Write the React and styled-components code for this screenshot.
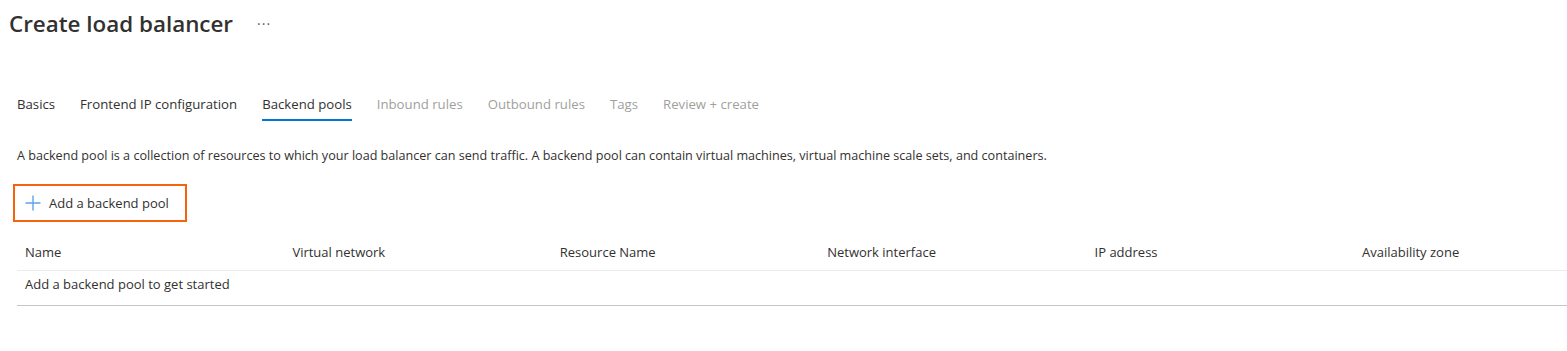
import React from 'react';
import styled, { createGlobalStyle } from 'styled-components';

const Global = createGlobalStyle`
  body {
    margin: 0;
    background: #fff;
    font-family: "Open Sans", "Noto Sans", sans-serif;
    color: #323130;
    overflow: hidden;
  }
`;

const Page = styled.div`
  padding-left: 17px;
  width: 1550px;
`;

const TitleRow = styled.div`
  display: flex;
  align-items: center;
  gap: 24px;
  margin: 8px 0 0 -8px;
  height: 32px;
`;

const Title = styled.h1`
  margin: 0;
  font-size: 22.4px;
  font-weight: 600;
  line-height: 32px;
  color: #323130;
`;

const More = styled.span`
  font-size: 14px;
  color: #605e5c;
  letter-spacing: 1px;
  line-height: 32px;
`;

const Tabs = styled.div`
  display: flex;
  gap: 25px;
  margin-top: 48px;
`;

const Tab = styled.div`
  font-size: 13.2px;
  line-height: 20px;
  padding: 6px 0 5px;
  border-bottom: 2px solid ${p => (p.$active ? '#0078d4' : 'transparent')};
  color: ${p => (p.$disabled ? '#a19f9d' : '#323130')};
  white-space: nowrap;
`;

const Description = styled.p`
  margin: 26px 0 0;
  font-size: 12.6px;
  line-height: 18px;
`;

const AddButton = styled.button`
  display: flex;
  align-items: center;
  gap: 8px;
  margin: 19px 0 0 -4px;
  height: 38px;
  width: 174px;
  padding: 0 0 0 10px;
  border: 2px solid #f7630c;
  background: #fff;
  font-family: inherit;
  font-size: 13px;
  color: #323130;
  cursor: pointer;
`;

const Grid = styled.div`
  display: grid;
  grid-template-columns: repeat(6, 267.4px);
`;

const HeadRow = styled(Grid)`
  margin-top: 12px;
  height: 36px;
  border-bottom: 1px solid #edebe9;
  align-items: center;
`;

const HeadCell = styled.div`
  padding-left: 8px;
  font-size: 13px;
  line-height: 18px;
`;

const EmptyRow = styled.div`
  padding: 4px 0 12px 8px;
  font-size: 13px;
  line-height: 18px;
  border-bottom: 1px solid #c8c6c4;
`;

const Plus = () => (
  <svg width="16" height="16" viewBox="0 0 16 16">
    <path d="M8 0.5v15M0.5 8h15" stroke="#5ea3eb" strokeWidth="1.4" fill="none" />
  </svg>
);

const tabs = [
  ['Basics'],
  ['Frontend IP configuration'],
  ['Backend pools', 'active'],
  ['Inbound rules', 'disabled'],
  ['Outbound rules', 'disabled'],
  ['Tags', 'disabled'],
  ['Review + create', 'disabled'],
];

const columns = ['Name', 'Virtual network', 'Resource Name', 'Network interface', 'IP address', 'Availability zone'];

export default function App() {
  return (
    <Page>
      <Global />
      <TitleRow>
        <Title>Create load balancer</Title>
        <More>···</More>
      </TitleRow>
      <Tabs>
        {tabs.map(([label, state]) => (
          <Tab key={label} $active={state === 'active'} $disabled={state === 'disabled'}>
            {label}
          </Tab>
        ))}
      </Tabs>
      <Description>
        A backend pool is a collection of resources to which your load balancer can send traffic. A backend pool can contain virtual machines, virtual machine scale sets, and containers.
      </Description>
      <AddButton>
        <Plus />
        Add a backend pool
      </AddButton>
      <HeadRow>
        {columns.map(c => (
          <HeadCell key={c}>{c}</HeadCell>
        ))}
      </HeadRow>
      <EmptyRow>Add a backend pool to get started</EmptyRow>
    </Page>
  );
}
